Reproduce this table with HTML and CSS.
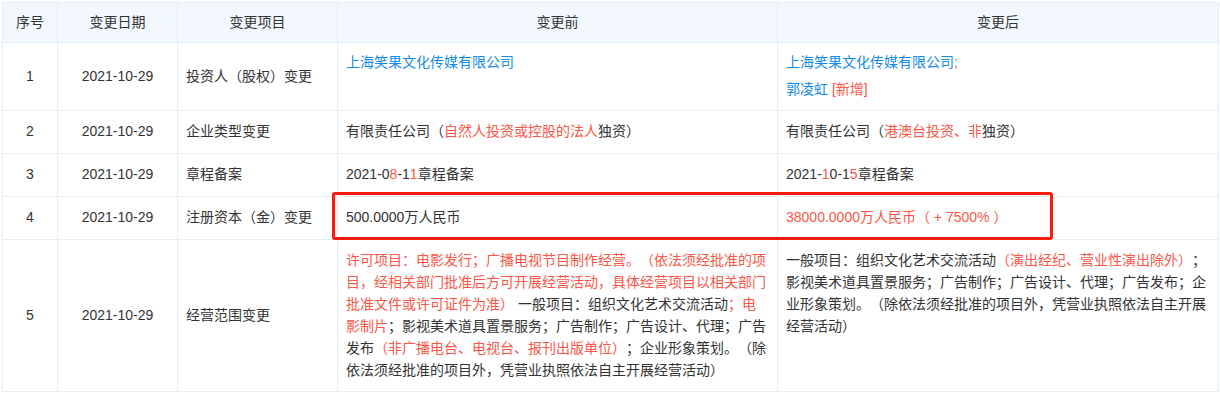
FILE: index.html
```html
<!DOCTYPE html>
<html lang="zh-CN">
<head>
<meta charset="utf-8">
<title>变更记录</title>
<link rel="stylesheet" href="styles.css">
</head>
<body>
<div class="wrap">
  <table class="changes">
    <colgroup>
      <col class="c-no">
      <col class="c-date">
      <col class="c-item">
      <col class="c-before">
      <col class="c-after">
    </colgroup>
    <thead>
      <tr>
        <th>序号</th>
        <th>变更日期</th>
        <th>变更项目</th>
        <th>变更前</th>
        <th>变更后</th>
      </tr>
    </thead>
    <tbody>
      <tr>
        <td class="mid center">1</td>
        <td class="mid center">2021-10-29</td>
        <td class="mid">投资人（股权）变更</td>
        <td class="top">
          <div class="entry"><span class="link">上海笑果文化传媒有限公司</span></div>
        </td>
        <td class="top">
          <div class="entry"><span class="link">上海笑果文化传媒有限公司</span><span class="hl">;</span></div>
          <div class="entry"><span class="link">郭凌虹</span> <span class="hl">[新增]</span></div>
        </td>
      </tr>
      <tr>
        <td class="mid center">2</td>
        <td class="mid center">2021-10-29</td>
        <td class="mid">企业类型变更</td>
        <td class="top">有限责任公司（<span class="hl">自然人投资或控股的法人</span>独资）</td>
        <td class="top">有限责任公司（<span class="hl">港澳台投资、非</span>独资）</td>
      </tr>
      <tr>
        <td class="mid center">3</td>
        <td class="mid center">2021-10-29</td>
        <td class="mid">章程备案</td>
        <td class="top">2021-0<span class="hl">8</span>-1<span class="hl">1</span>章程备案</td>
        <td class="top">2021-<span class="hl">1</span>0-1<span class="hl">5</span>章程备案</td>
      </tr>
      <tr>
        <td class="mid center">4</td>
        <td class="mid center">2021-10-29</td>
        <td class="mid">注册资本（金）变更</td>
        <td class="top">500.0000万人民币</td>
        <td class="top"><span class="hl">38000.0000万人民币（ + 7500% ）</span></td>
      </tr>
      <tr class="last">
        <td class="mid center">5</td>
        <td class="mid center">2021-10-29</td>
        <td class="mid">经营范围变更</td>
        <td class="top"><span class="hl">许可项目：电影发行；广播电视节目制作经营。（依法须经批准的项目，经相关部门批准后方可开展经营活动，具体经营项目以相关部门批准文件或许可证件为准）</span> 一般项目：组织文化艺术交流活动<span class="hl">；电影制片</span>；影视美术道具置景服务；广告制作；广告设计、代理；广告发布<span class="hl">（非广播电台、电视台、报刊出版单位）</span>；企业形象策划。（除依法须经批准的项目外，凭营业执照依法自主开展经营活动）</td>
        <td class="top">一般项目：组织文化艺术交流活动<span class="hl">（演出经纪、营业性演出除外）</span>；影视美术道具置景服务；广告制作；广告设计、代理；广告发布；企业形象策划。（除依法须经批准的项目外，凭营业执照依法自主开展经营活动）</td>
      </tr>
    </tbody>
  </table>
  <div class="mark"></div>
</div>
</body>
</html>
```

FILE: styles.css
```css
html, body {
  margin: 0;
  padding: 0;
  background: #ffffff;
}

body {
  font-family: "Liberation Sans", "Noto Sans CJK SC", sans-serif;
  font-size: 14px;
  color: #333333;
  text-spacing-trim: space-all;
  font-kerning: none;
}

.wrap {
  position: relative;
  padding: 2px;
}

.changes {
  border-collapse: collapse;
  table-layout: fixed;
  width: 1216px;
}

.c-no { width: 55px; }
.c-date { width: 120px; }
.c-item { width: 160px; }
.c-before { width: 440px; }
.c-after { width: 441px; }

.changes th,
.changes td {
  border: 1px solid #e4eef6;
  line-height: 22px;
  padding: 9px 8px 11px;
  text-align: left;
}

.changes th {
  background: #f2f8fd;
  font-weight: normal;
  text-align: center;
  padding: 8px 8px 9px;
  color: #333333;
}

.changes .last td {
  padding-bottom: 10px;
}

.changes td.center {
  text-align: center;
}

.changes td.mid {
  vertical-align: middle;
}

.changes td.top {
  vertical-align: top;
}

.entry {
  line-height: 20px;
}

.entry + .entry {
  margin-top: 7px;
}

.link {
  color: #128bed;
}

.hl {
  color: #fb5648;
}

.mark {
  position: absolute;
  left: 332px;
  top: 192px;
  width: 715px;
  height: 42px;
  border: 3px solid #ff1a10;
  border-radius: 3px;
}
```
